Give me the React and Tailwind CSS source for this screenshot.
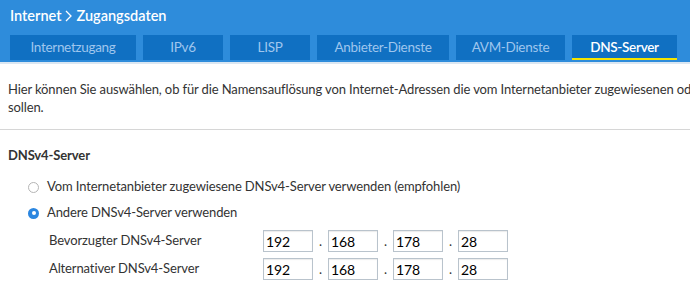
import React from 'react';

const tabs = [
  { label: 'Internetzugang', w: 'w-[126px]' },
  { label: 'IPv6', w: 'w-[80px]' },
  { label: 'LISP', w: 'w-[80px]' },
  { label: 'Anbieter-Dienste', w: 'w-[132px]' },
  { label: 'AVM-Dienste', w: 'w-[109px]' },
  { label: 'DNS-Server', w: 'w-[105px]', active: true },
];

const IpInput = ({ parts }) => (
  <div className="flex items-center">
    {parts.map((p, i) => (
      <React.Fragment key={i}>
        {i > 0 && <span className="w-[15px] text-center text-[13px] leading-none">.</span>}
        <div className="w-[50px] h-[22px] border border-[#b9c3cc] bg-white flex items-center pl-[2px] text-[14px] text-black shadow-[inset_0_1px_1px_rgba(0,0,0,0.08)]">
          {p}
        </div>
      </React.Fragment>
    ))}
  </div>
);

const App = () => {
  return (
    <div className="w-[690px] h-[285px] overflow-hidden bg-white text-[#333] font-['Lato',sans-serif] text-[13px] tracking-[-0.12px]">
      {/* header */}
      <div className="bg-[#2e8cdb] pt-[5px]">
        <h1 className="flex items-center gap-[2px] px-[10px] h-[22px] text-white text-[14.5px] font-semibold tracking-normal">
          Internet
          <svg width="9" height="14" viewBox="0 0 9 14" className="mx-[1px]">
            <path d="M2 2l5 5-5 5" fill="none" stroke="white" strokeWidth="1.3" />
          </svg>
          Zugangsdaten
        </h1>
        <div className="flex gap-[7px] px-[10px] pt-[8px] pb-[2px] text-[13.5px] tracking-[-0.3px]">
          {tabs.map((t) => (
            <div
              key={t.label}
              className={`${t.w} h-[25px] bg-[#1070c2] flex items-center justify-center ${
                t.active
                  ? 'text-white font-semibold border-b-[2px] border-[#f5e400] pt-[2px]'
                  : 'text-[#9fc6ee]'
              }`}
            >
              {t.label}
            </div>
          ))}
        </div>
      </div>
      <div className="h-[2px] bg-[#dbe7f2]" />

      {/* content */}
      <p className="px-[8px] pt-[16px] leading-[18px] whitespace-nowrap">
        Hier können Sie auswählen, ob für die Namensauflösung von Internet-Adressen die vom Internetanbieter zugewiesenen oder
        <br />
        sollen.
      </p>
      <div className="mt-[13px] h-px bg-[#d6d6d6]" />

      <h2 className="px-[8px] pt-[16px] font-bold leading-[18px]">DNSv4-Server</h2>

      <div className="pl-[28px] pt-[10px] flex flex-col">
        <label className="flex items-center h-[26px]">
          <span className="w-[11px] h-[11px] rounded-full border border-[#b5b5b5] bg-white mr-[8px]" />
          Vom Internetanbieter zugewiesene DNSv4-Server verwenden (empfohlen)
        </label>
        <label className="flex items-center h-[26px]">
          <span className="w-[11px] h-[11px] rounded-full bg-[#2b86e0] mr-[8px] flex items-center justify-center">
            <span className="w-[4px] h-[4px] rounded-full bg-white" />
          </span>
          Andere DNSv4-Server verwenden
        </label>
        <div className="pl-[21px] flex flex-col gap-[6px] pt-[4px]">
          <div className="flex items-center">
            <span className="w-[214px]">Bevorzugter DNSv4-Server</span>
            <IpInput parts={['192', '168', '178', '28']} />
          </div>
          <div className="flex items-center">
            <span className="w-[214px]">Alternativer DNSv4-Server</span>
            <IpInput parts={['192', '168', '178', '28']} />
          </div>
        </div>
      </div>
    </div>
  );
};

export default App;
